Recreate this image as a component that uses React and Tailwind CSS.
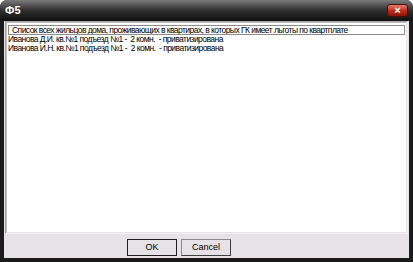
export default function App() {
  const rows = [
    'Иванова Д.И. кв.№1 подъезд №1 -  2 комн.  - приватизирована',
    'Иванова И.Н. кв.№1 подъезд №1 -  2 комн.  - приватизирована',
  ]

  return (
    <div className="w-[413px] h-[262px] flex flex-col bg-[#1b1b1b] rounded-t-[7px] overflow-hidden font-['Liberation_Sans',Arial,sans-serif]">
      {/* title bar */}
      <div className="h-[21px] flex items-center justify-between pl-[5px] pr-[5px] bg-gradient-to-b from-[#7c7c7c] via-[#2f2f2f] to-[#101010]">
        <span className="text-[11px] font-bold text-white leading-none">Ф5</span>
        <div className="w-[21px] h-[13px] mt-[-1px] rounded-[3px] border border-[#4a0e0e] bg-gradient-to-b from-[#e07b6e] via-[#c42b1c] to-[#8c1208] flex items-center justify-center">
          <span className="text-[11px] font-bold text-white leading-none">×</span>
        </div>
      </div>

      {/* client area */}
      <div className="flex-1 mx-[4px] mb-[4px] bg-[#e6e2e5] flex flex-col">
        <div className="flex-1 ml-[1px] mr-[1px] border border-[#a9a6a8] border-r-[#f3f1f2] border-b-[#f3f1f2] bg-white">
          <div className="h-full border border-[#bdbabc] border-r-[#e6e2e5] border-b-[#e6e2e5] pt-[2px] pl-[1px] pr-[1px] text-[8.5px] tracking-[-0.55px] leading-[9px] text-black">
            <div className="h-[10px] border border-[#8e8b8d] pl-[3px] whitespace-nowrap overflow-hidden">
              Список всех жильцов дома, проживающих в квартирах, в которых ГК имеет льготы по квартплате
            </div>
            {rows.map((r, i) => (
              <div key={i} className="h-[9px] whitespace-pre">{r}</div>
            ))}
          </div>
        </div>

        {/* buttons */}
        <div className="h-[24px] flex items-center justify-center gap-[4px] pr-[55px] pt-[2px]">
          <button className="w-[50px] h-[17px] bg-[#e6e2e5] border border-[#202020] text-[9px] text-black leading-none">
            OK
          </button>
          <button className="w-[50px] h-[17px] bg-[#e6e2e5] border border-[#8d8a8c] border-r-[#404040] border-b-[#404040] text-[9px] text-black leading-none">
            Cancel
          </button>
        </div>
      </div>
    </div>
  )
}
